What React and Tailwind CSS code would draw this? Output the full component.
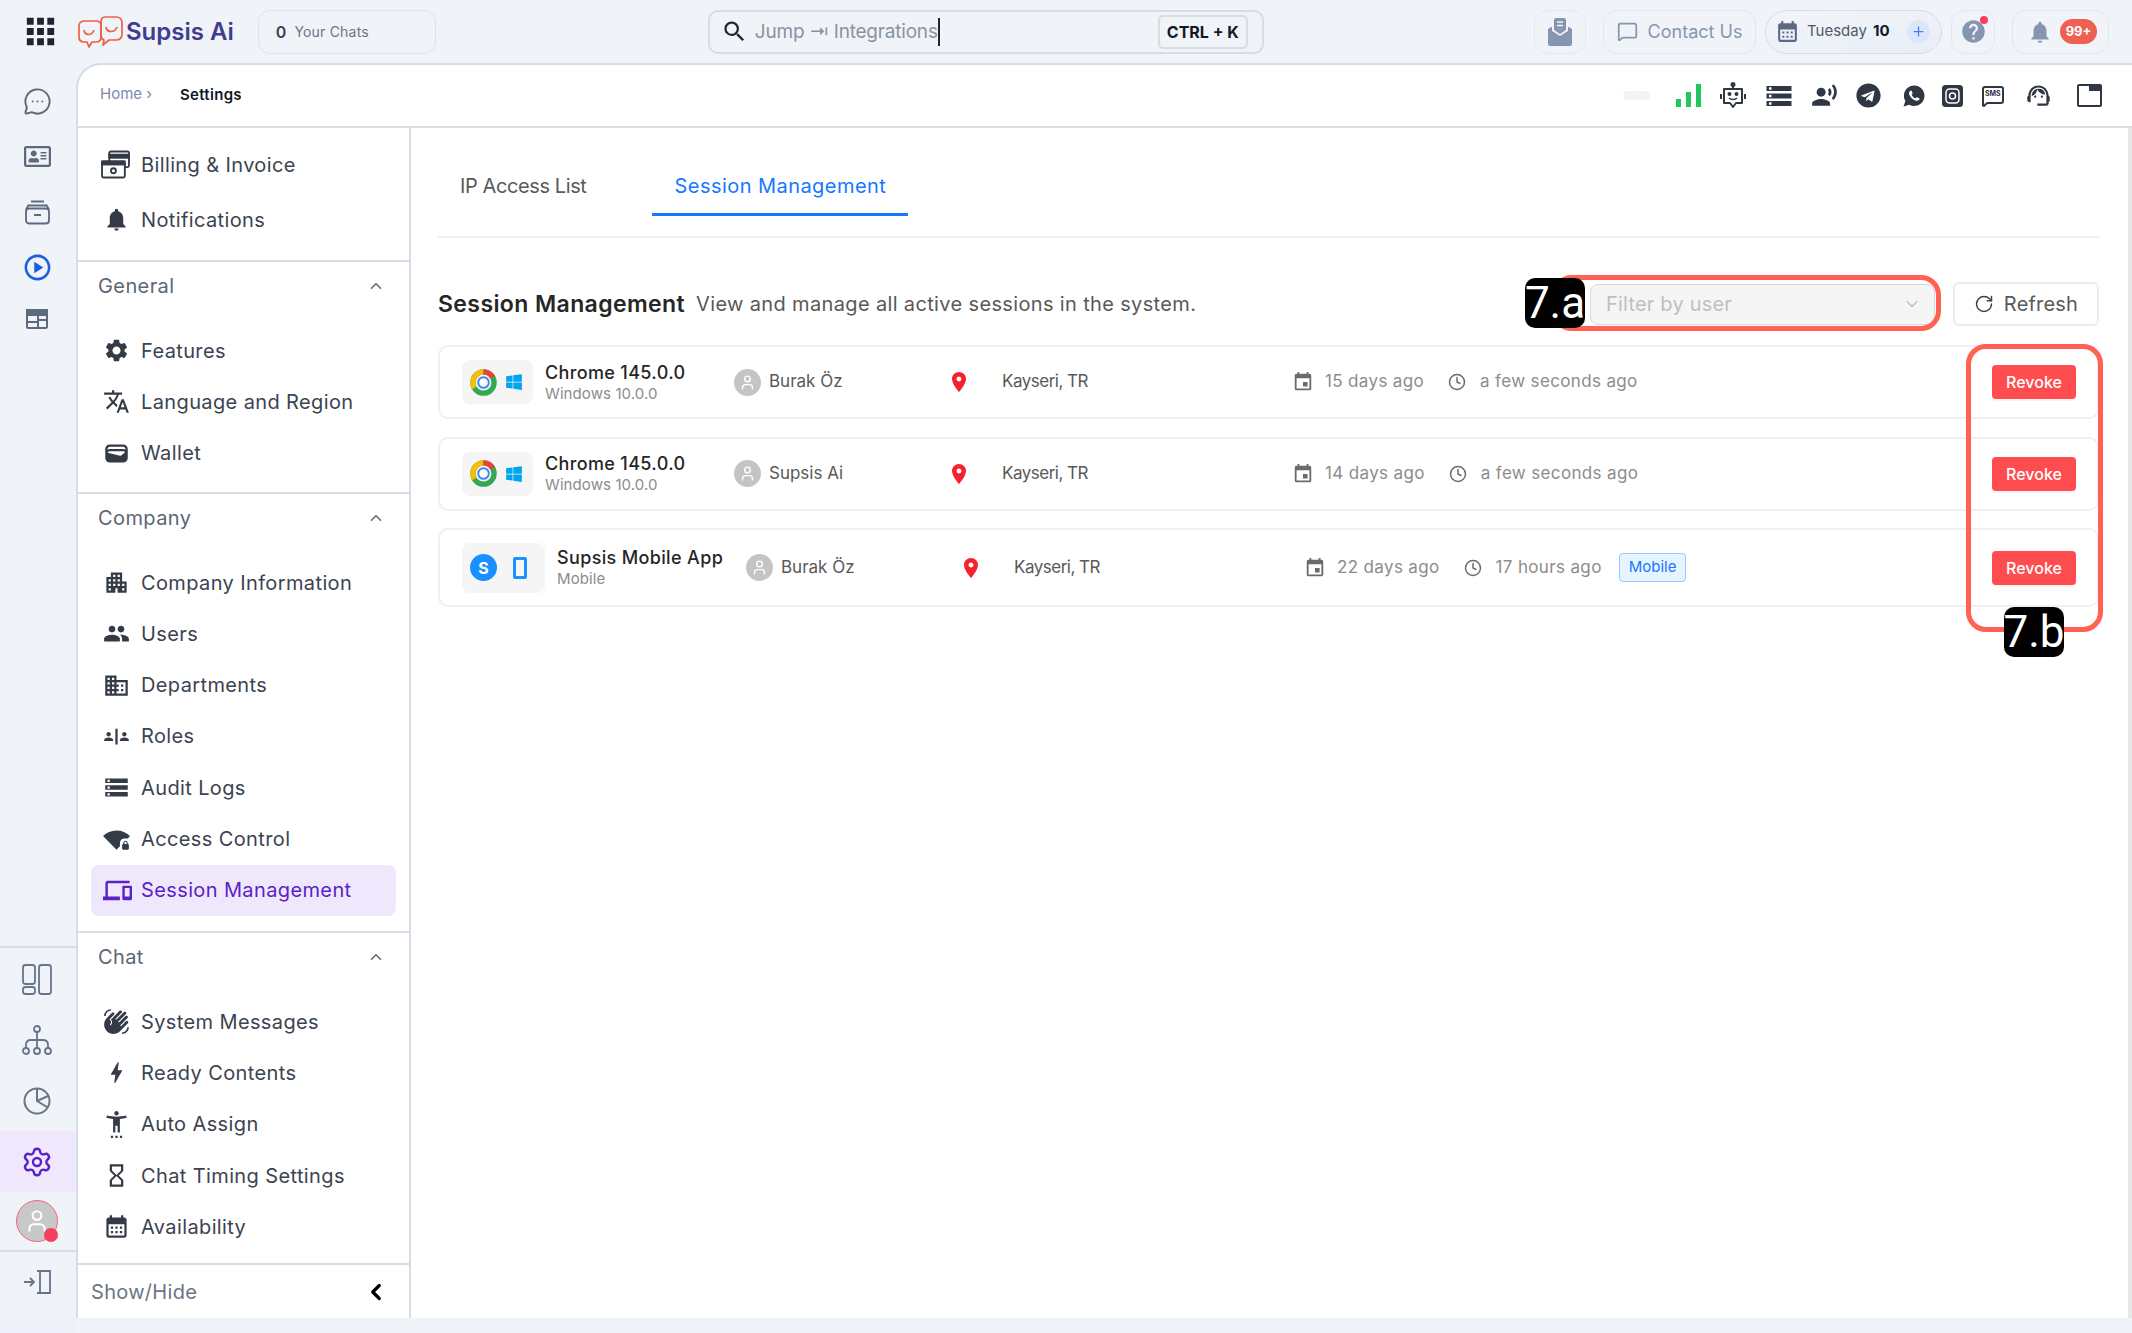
import React from "react";
import { MdApps, MdNotifications, MdSettings, MdTranslate, MdWallet, MdApartment, MdPeople, MdDomain, MdSafetyDivider, MdStorage, MdSignalWifi4BarLock, MdOutlineDevices, MdWavingHand, MdBolt, MdSettingsAccessibility, MdHourglassEmpty, MdCalendarMonth, MdLocationOn, MdEvent, MdSearch, MdRecordVoiceOver, MdOutlineSupportAgent, MdOutlinePlayCircle, MdHelp } from "react-icons/md";
import { FaTelegram, FaWindows, FaRegAddressCard } from "react-icons/fa";
import { IoLogoWhatsapp } from "react-icons/io";
import { MessageCircleMore, ChevronUp, ChevronDown, ChevronLeft, RotateCw, Clock, MessageSquare, Plus, Settings, User } from "lucide-react";

const FONT = "font-['Inter','Liberation_Sans',sans-serif]";

function Logo() {
  return (
    <svg width="45" height="32" viewBox="0 0 45 32" fill="none" stroke="#ee5f45" strokeWidth="1.7" strokeLinejoin="round">
      <path d="M7 5h11c3 0 5 2 5 5v11c0 3-2 5-5 5h-4l-3 5-2-5H6c-3 0-5-2-5-5V10c0-3 2-5 6-5z" />
      <path d="M27 1h11c4 0 6 2 6 6v11c0 4-2 6-6 6h-7l-6 5 1-5c-2-1-3-2-3-4V7c0-4 1-6 4-6z" />
      <path d="M6 14c1 6 8 6 10 0M28 11c1 6 9 6 11 0" />
    </svg>
  );
}

function MailIcon() {
  return (
    <svg width="24" height="28" viewBox="0 0 24 28" fill="#8796b0">
      <path d="M6 2a2 2 0 0 1 2-2h8a2 2 0 0 1 2 2v10l-6 4-6-4z" />
      <path d="M9 4h6M9 7.5h6" stroke="#f0f4f8" strokeWidth="1.6" />
      <path d="M0 11l4-2.5V13l8 5 8-5V8.5l4 2.5v15a2 2 0 0 1-2 2H2a2 2 0 0 1-2-2z" />
    </svg>
  );
}

function BillingIcon() {
  return (
    <svg width="29" height="29" viewBox="0 0 28 28" fill="none" stroke="#343a46" strokeWidth="1.8">
      <rect x="8" y="1.5" width="19" height="15" rx="1.5" />
      <rect x="8" y="4.5" width="19" height="3" fill="#343a46" />
      <rect x="1" y="11" width="22" height="15.5" rx="1.5" fill="#fff" />
      <rect x="1" y="11" width="22" height="3" fill="#343a46" />
      <circle cx="12" cy="20" r="2.4" />
    </svg>
  );
}

function ChromeIcon() {
  return (
    <svg width="27" height="27" viewBox="0 0 28 28" fill="none">
      <circle cx="14" cy="14" r="11" stroke="#34a853" strokeWidth="5.5" />
      <path d="M4.5 19.5A11 11 0 0 1 14 3" stroke="#fbbc05" strokeWidth="5.5" />
      <path d="M14 3a11 11 0 0 1 9.5 5.5" stroke="#ea4335" strokeWidth="5.5" />
      <circle cx="14" cy="14" r="5.5" fill="#fff" stroke="#4285f4" strokeWidth="2" />
    </svg>
  );
}

function RailInbox() {
  return (
    <svg width="27" height="27" viewBox="0 0 27 27" fill="none" stroke="#5d6a7d" strokeWidth="1.8" strokeLinejoin="round">
      <path d="M5 6.5h17M7 2.5h13" />
      <rect x="2" y="9.5" width="23" height="15" rx="3" />
      <path d="M2 10.5l3-5M25 10.5l-3-5M10 16h7" />
    </svg>
  );
}

function RailPanel() {
  return (
    <svg width="24" height="24" viewBox="0 0 24 24" fill="none" stroke="#5d6a7d" strokeWidth="2">
      <rect x="2" y="3" width="20" height="18" rx="1.5" />
      <rect x="2" y="3" width="20" height="5" fill="#5d6a7d" />
      <path d="M13 8v13M2 15h11M13 13h9" />
    </svg>
  );
}

function RailBoard() {
  return (
    <svg width="32" height="32" viewBox="0 0 32 32" fill="none" stroke="#67748a" strokeWidth="1.8">
      <rect x="2" y="2" width="12" height="19" rx="2.5" />
      <rect x="2" y="24" width="12" height="7" rx="2.5" />
      <rect x="18" y="2" width="12" height="29" rx="2.5" />
    </svg>
  );
}

function RailTree() {
  return (
    <svg width="32" height="32" viewBox="0 0 32 32" fill="none" stroke="#67748a" strokeWidth="1.8">
      <circle cx="16" cy="5" r="3" />
      <circle cx="5" cy="27" r="3" />
      <circle cx="16" cy="27" r="3" />
      <circle cx="27" cy="27" r="3" />
      <path d="M16 8v16M5 24v-3c0-3 2-5 5-5h12c3 0 5 2 5 5v3" />
    </svg>
  );
}

function RailPie() {
  return (
    <svg width="30" height="30" viewBox="0 0 30 30" fill="none" stroke="#67748a" strokeWidth="2">
      <circle cx="15" cy="15" r="12.5" />
      <path d="M15 3v12l10 6M15 15l11-5" />
    </svg>
  );
}

function RailCollapse() {
  return (
    <svg width="30" height="26" viewBox="0 0 30 26" fill="none" stroke="#67748a" strokeWidth="1.8">
      <path d="M2 13h10M8 9l4 4-4 4" />
      <path d="M15 2h3v22h-3M18 2h10v22H18" />
    </svg>
  );
}

function RobotIcon() {
  return (
    <svg width="26" height="28" viewBox="0 0 26 28" fill="none" stroke="#2f3644" strokeWidth="2" strokeLinejoin="round">
      <circle cx="13" cy="2.5" r="1.5" fill="#2f3644" />
      <path d="M13 4v3" />
      <path d="M4 7h18v14h-6l-3 4-3-4H4z" />
      <path d="M1 12v5M25 12v5" />
      <path d="M9 16c2 2 6 2 8 0" strokeWidth="1.6" />
      <circle cx="9.5" cy="12" r="1" fill="#2f3644" />
      <circle cx="16.5" cy="12" r="1" fill="#2f3644" />
    </svg>
  );
}

function InstagramIcon() {
  return (
    <svg width="21" height="24" viewBox="0 0 21 24">
      <rect x="0" y="1" width="21" height="22" rx="3.5" fill="#2f3644" />
      <rect x="4" y="5" width="13" height="14" rx="3.5" fill="none" stroke="#fff" strokeWidth="1.5" />
      <circle cx="10.5" cy="12" r="3" fill="none" stroke="#fff" strokeWidth="1.5" />
    </svg>
  );
}

function WindowIcon() {
  return (
    <svg width="25" height="23" viewBox="0 0 25 23" fill="none">
      <rect x="1" y="1" width="23" height="21" rx="1" stroke="#2f3644" strokeWidth="2" />
      <rect x="12" y="1" width="12" height="6" fill="#2f3644" />
    </svg>
  );
}

function SignalIcon() {
  return (
    <svg width="25" height="23" viewBox="0 0 25 23" fill="#22c55e">
      <rect x="0" y="15" width="5" height="8" />
      <rect x="10" y="8" width="5" height="15" />
      <rect x="20" y="0" width="5" height="23" />
    </svg>
  );
}

function SideItem({ icon, label, active }) {
  return (
    <div className={`mx-[13px] flex h-[51.3px] items-center rounded-[8px] px-[12px] ${active ? "bg-[#efe8fd] text-[#5b21c8]" : "text-[#3c4350]"}`}>
      <span className="flex w-[38px] shrink-0 items-center">{icon}</span>
      <span className="text-[20px] leading-none tracking-[0.38px]">{label}</span>
    </div>
  );
}

function SideSection({ title, items, pb }) {
  return (
    <div className={`border-b-2 border-[#d5dde6] ${pb}`}>
      <div className="flex h-[48px] items-center justify-between pl-[20px] pr-[24px] text-[#5c6675]">
        <span className="text-[20px] tracking-[0.4px]">{title}</span>
        <ChevronUp size={18} />
      </div>
      <div className="pt-[15px]">
        {items.map((it) => (
          <SideItem key={it.label} {...it} />
        ))}
      </div>
    </div>
  );
}

const ic = "text-[#343a46] text-[27px]";

function SessionRow({ mobile, title, sub, user, loc, created, seen, h }) {
  return (
    <div className={`flex items-center rounded-[10px] border-2 border-[#f0f0f0] pl-[22px] pr-[21px] ${h}`}>
      <div className={`flex items-center rounded-[8px] bg-[#f5f5f5] pl-[8px] ${mobile ? "h-[50px] w-[83px] gap-[16px]" : "h-[44px] w-[71px] gap-[8px]"}`}>
        {mobile ? (
          <>
            <span className="flex h-[27px] w-[27px] items-center justify-center rounded-full bg-[#1a8fff] text-[16px] font-bold text-white">S</span>
            <span className="h-[22px] w-[14px] rounded-[2px] border-[3px] border-[#1a8fff]" />
          </>
        ) : (
          <>
            <ChromeIcon />
            <FaWindows className="text-[18px] text-[#00a4ef]" />
          </>
        )}
      </div>
      <div className="ml-[12px] w-[189px]">
        <div className="text-[18px] font-medium leading-[22px] tracking-[0.35px] text-[#262626]">{title}</div>
        <div className="text-[15px] leading-[19px] tracking-[0.1px] text-[#8c8c8c]">{sub}</div>
      </div>
      <div className="flex w-[213px] items-center gap-[8px]">
        <span className="flex h-[27px] w-[27px] items-center justify-center rounded-full bg-[#c4c4c4]">
          <User size={17} className="text-white" />
        </span>
        <span className="text-[17px] text-[#595959]">{user}</span>
      </div>
      <MdLocationOn className="text-[24px] text-[#f5222d]" />
      <span className="ml-[31px] w-[290px] text-[17px] tracking-[-0.5px] text-[#595959]">{loc}</span>
      <div className="flex items-center gap-[11px] text-[17px] tracking-[0.35px] text-[#8c8c8c]">
        <MdEvent className="text-[22px] text-[#6b6b6b]" />
        <span>{created}</span>
        <Clock size={18} className="ml-[13px] text-[#6b6b6b]" />
        <span className="ml-[3px]">{seen}</span>
        {mobile && <span className="ml-[6px] rounded-[4px] border border-[#91caff] bg-[#e6f4ff] px-[9px] py-[2px] text-[15px] tracking-normal text-[#1677ff]">Mobile</span>}
      </div>
      <button className="ml-auto h-[34px] w-[84px] rounded-[4px] bg-[#ff4d4f] text-[16px] font-medium text-white shadow-[0_2px_0_rgba(255,38,5,0.06)]">Revoke</button>
    </div>
  );
}

const general = [
  { label: "Features", icon: <MdSettings className={ic} /> },
  { label: "Language and Region", icon: <MdTranslate className={ic} /> },
  { label: "Wallet", icon: <MdWallet className={ic} /> },
];
const company = [
  { label: "Company Information", icon: <MdApartment className={ic} /> },
  { label: "Users", icon: <MdPeople className={ic} /> },
  { label: "Departments", icon: <MdDomain className={ic} /> },
  { label: "Roles", icon: <MdSafetyDivider className={ic} /> },
  { label: "Audit Logs", icon: <MdStorage className={ic} /> },
  { label: "Access Control", icon: <MdSignalWifi4BarLock className={ic} /> },
  { label: "Session Management", active: true, icon: <MdOutlineDevices className="text-[29px] text-[#5b21c8]" /> },
];
const chat = [
  { label: "System Messages", icon: <MdWavingHand className={ic} /> },
  { label: "Ready Contents", icon: <MdBolt className={ic} /> },
  { label: "Auto Assign", icon: <MdSettingsAccessibility className={ic} /> },
  { label: "Chat Timing Settings", icon: <MdHourglassEmpty className={ic} /> },
  { label: "Availability", icon: <MdCalendarMonth className={ic} /> },
];

const topBtn = "flex h-[44px] items-center rounded-[14px] border border-[#e3e8ee]";

export default function App() {
  return (
    <div className={`${FONT} relative flex h-[1333px] flex-col overflow-hidden bg-[#f0f4f8]`}>
      {/* Top bar */}
      <header className="flex h-[63px] shrink-0 items-center">
        <MdApps className="ml-[20px] text-[41px] text-[#1f2430]" />
        <div className="ml-[17px]"><Logo /></div>
        <span className="ml-[3px] text-[24px] font-semibold leading-none text-[#3f3d8f]">Supsis Ai</span>
        <div className="ml-[24px] flex h-[44px] w-[178px] items-center rounded-[12px] border border-[#dde3ea] pl-[17px]">
          <span className="text-[16px] font-semibold text-[#3c4350]">0</span>
          <span className="ml-[8px] text-[14px] tracking-[0.2px] text-[#6b7583]">Your Chats</span>
        </div>
        <div className="ml-[272px] flex h-[44px] w-[556px] items-center rounded-[10px] border-2 border-[#d5dde6] pl-[11px] pr-[14px]">
          <MdSearch className="text-[27px] text-[#1f2430]" />
          <span className="ml-[7px] border-r-2 border-[#1f2430] py-[3px] text-[19px] leading-[22px] tracking-[-0.2px] text-[#8a93a0]">Jump ⇥ Integrations</span>
          <span className="ml-auto flex h-[34px] w-[90px] items-center justify-center rounded-[5px] border-2 border-[#d5dde6] text-[16px] font-bold text-[#14181f]">CTRL + K</span>
        </div>
        <div className="ml-auto mr-[23px] flex items-center">
          <div className={`${topBtn} w-[52px] justify-center`}><MailIcon /></div>
          <div className={`${topBtn} ml-[17px] w-[153px] justify-center gap-[10px] text-[#8796b0]`}>
            <MessageSquare size={21} />
            <span className="text-[18px]">Contact Us</span>
          </div>
          <div className="ml-[9px] flex h-[44px] w-[177px] items-center rounded-full border border-[#d5dde6] bg-gradient-to-br from-[#f2f5f9] to-[#e8eef7] pl-[9px]">
            <MdCalendarMonth className="text-[25px] text-[#5d6a85]" />
            <span className="ml-[7px] text-[15px] text-[#4f5a6b]">Tuesday</span>
            <span className="ml-[6px] text-[15px] font-bold text-[#101828]">10</span>
            <span className="ml-auto mr-[11px] flex h-[23px] w-[23px] items-center justify-center rounded-full bg-[#dbe7f8]">
              <Plus size={15} className="text-[#3b82f6]" />
            </span>
          </div>
          <div className={`${topBtn} relative ml-[9px] w-[44px] justify-center`}>
            <MdHelp className="text-[27px] text-[#8796b0]" />
            <span className="absolute right-[6px] top-[5px] h-[8px] w-[8px] rounded-full bg-[#f43f5e]" />
          </div>
          <div className={`${topBtn} ml-[17px] w-[97px] gap-[7px] pl-[14px]`}>
            <MdNotifications className="text-[26px] text-[#8796b0]" />
            <span className="flex h-[25px] w-[37px] items-center justify-center rounded-full bg-[#ef5f52] text-[13px] font-bold text-white">99+</span>
          </div>
        </div>
      </header>

      <div className="flex min-h-0 flex-1">
        {/* Rail */}
        <nav className="flex w-[76px] shrink-0 flex-col text-[#5d6a7d]">
          <div className="flex flex-col items-center pt-[11px] pr-[2px]">
            <div className="flex h-[54px] items-center"><MessageCircleMore size={29} strokeWidth={1.6} /></div>
            <div className="flex h-[56px] items-center"><FaRegAddressCard className="text-[27px]" /></div>
            <div className="flex h-[56px] items-center"><RailInbox /></div>
            <div className="flex h-[54px] items-center"><MdOutlinePlayCircle className="text-[31px] text-[#1d5fe0]" /></div>
            <div className="flex h-[50px] items-center"><RailPanel /></div>
          </div>
          <div className="mt-auto border-t-2 border-[#d5dde6]">
            <div className="flex h-[61px] items-center justify-center pr-[2px]"><RailBoard /></div>
            <div className="flex h-[61px] items-center justify-center pr-[2px]"><RailTree /></div>
            <div className="flex h-[61px] items-center justify-center pr-[2px]"><RailPie /></div>
            <div className="flex h-[61px] items-center justify-center bg-[#f0e8fd] pr-[2px]"><Settings size={32} strokeWidth={1.8} className="text-[#5b21c8]" /></div>
            <div className="flex h-[60px] items-center justify-center border-b-2 border-[#d5dde6] pr-[2px]">
              <span className="relative flex h-[42px] w-[42px] items-center justify-center rounded-full border border-[#f2687c] bg-[#c8c8c8]">
                <User size={26} className="text-white" />
                <span className="absolute bottom-[-1px] right-[-1px] h-[14px] w-[14px] rounded-full bg-[#f43f5e]" />
              </span>
            </div>
            <div className="flex h-[66px] items-start justify-center pr-[2px] pt-[17px]"><RailCollapse /></div>
            <div className="h-[15px] bg-[#eef1f9]" />
          </div>
        </nav>

        {/* Main */}
        <div className="mb-[15px] flex min-w-0 flex-1 flex-col overflow-hidden rounded-tl-[25px] border-l-2 border-t-2 border-[#d5dde6] bg-white">
          <div className="flex h-[63px] shrink-0 items-center border-b-2 border-[#d5dde6] pl-[22px] pr-[30px]">
            <span className="-mt-[2px] text-[15px] text-[#7a88b0]">Home ›</span>
            <span className="ml-[28px] text-[15px] font-semibold tracking-[0.3px] text-[#111827]">Settings</span>
            <div className="ml-auto flex items-center">
              <span className="h-[9px] w-[27px] rounded-full bg-[#f1f4f7]" />
              <span className="ml-[26px] flex"><SignalIcon /></span>
              <span className="ml-[19px] flex"><RobotIcon /></span>
              <MdStorage className="ml-[18px] text-[30px] text-[#2f3644]" />
              <MdRecordVoiceOver className="ml-[17px] text-[27px] text-[#2f3644]" />
              <FaTelegram className="ml-[18px] text-[25px] text-[#2f3644]" />
              <IoLogoWhatsapp className="ml-[21px] text-[24px] text-[#2f3644]" />
              <span className="ml-[16px] flex"><InstagramIcon /></span>
              <span className="relative ml-[18px] flex">
                <MessageSquare size={24} className="text-[#2f3644]" />
                <span className="absolute left-[4px] top-[6px] text-[7px] font-bold leading-[8px] text-[#2f3644]">SMS</span>
              </span>
              <MdOutlineSupportAgent className="ml-[20px] text-[27px] text-[#2f3644]" />
              <span className="ml-[25px] flex"><WindowIcon /></span>
            </div>
          </div>

          <div className="flex min-h-0 flex-1">
            {/* Settings sidebar */}
            <aside className="flex w-[333px] shrink-0 flex-col overflow-hidden border-r-2 border-[#d5dde6]">
              <div className="h-[134px] shrink-0 border-b-2 border-[#d5dde6] pt-[9px]">
                <div className="mx-[13px] flex h-[55px] items-center px-[10px] text-[#3c4350]">
                  <span className="flex w-[40px] shrink-0"><BillingIcon /></span>
                  <span className="text-[20px] tracking-[0.38px]">Billing &amp; Invoice</span>
                </div>
                <div className="mx-[13px] flex h-[55px] items-center px-[12px] text-[#3c4350]">
                  <span className="flex w-[38px] shrink-0"><MdNotifications className={ic} /></span>
                  <span className="text-[20px] tracking-[0.38px]">Notifications</span>
                </div>
              </div>
              <SideSection title="General" items={general} pb="pb-[13px]" />
              <SideSection title="Company" items={company} pb="pb-[15px]" />
              <SideSection title="Chat" items={chat} pb="pb-[11px]" />
              <div className="flex flex-1 items-center justify-between pl-[13px] pr-[20px] text-[#6b7583]">
                <span className="text-[20px] tracking-[0.3px]">Show/Hide</span>
                <ChevronLeft size={26} strokeWidth={3} className="text-black" />
              </div>
            </aside>

            {/* Content */}
            <main className="min-w-0 flex-1 pl-[27px] pr-[29px]">
              <div className="flex h-[88px] items-end gap-[44px]">
                <div className="flex h-[67px] items-start px-[22px] pt-[25px] text-[20px] leading-[24px] tracking-[-0.4px] text-[#595959]">IP Access List</div>
                <div className="flex h-[67px] items-start border-b-[3px] border-[#1677ff] px-[22px] pt-[25px] text-[20px] leading-[24px] tracking-[0.45px] text-[#1677ff]">Session Management</div>
              </div>
              <div className="mt-[20px] h-[2px] bg-[#f0f0f0]" />
              <div className="mt-[44px] flex h-[44px] items-center">
                <h1 className="text-[23px] font-semibold tracking-[0.4px] text-[#262626]">Session Management</h1>
                <span className="ml-[11px] text-[20px] tracking-[0.35px] text-[#595959]">View and manage all active sessions in the system.</span>
                <div className="ml-auto flex h-[41px] w-[345px] items-center justify-between rounded-[8px] border border-[#d9d9d9] bg-[#f5f5f5] pl-[15px] pr-[12px]">
                  <span className="text-[20px] tracking-[0.2px] text-[#bfbfbf]">Filter by user</span>
                  <ChevronDown size={20} strokeWidth={1.5} className="text-[#bfbfbf]" />
                </div>
                <button className="ml-[18px] flex h-[44px] w-[146px] items-center justify-center gap-[10px] rounded-[6px] border-2 border-[#ededed] text-[20px] tracking-[0.2px] text-[#595959]">
                  <RotateCw size={20} strokeWidth={1.8} className="text-[#434343]" />
                  Refresh
                </button>
              </div>
              <div className="mt-[19px] flex flex-col gap-[17.5px]">
                <SessionRow h="h-[74px]" title="Chrome 145.0.0" sub="Windows 10.0.0" user="Burak Öz" loc="Kayseri, TR" created="15 days ago" seen="a few seconds ago" />
                <SessionRow h="h-[74px]" title="Chrome 145.0.0" sub="Windows 10.0.0" user="Supsis Ai" loc="Kayseri, TR" created="14 days ago" seen="a few seconds ago" />
                <SessionRow h="h-[79px]" mobile title="Supsis Mobile App" sub="Mobile" user="Burak Öz" loc="Kayseri, TR" created="22 days ago" seen="17 hours ago" />
              </div>
            </main>
            <div className="w-[4px] shrink-0 bg-[#e8e8e8]" />
          </div>
        </div>
      </div>

      {/* Annotation overlays */}
      <div className="absolute left-[1552px] top-[275px] h-[56px] w-[389px] rounded-[20px] border-[5px] border-[#ff6152]" />
      <div className="absolute left-[1525px] top-[278px] flex h-[50px] w-[60px] items-center justify-center rounded-[10px] bg-black font-['Roboto',sans-serif] text-[44px] leading-none text-white">7.a</div>
      <div className="absolute left-[1966px] top-[344px] h-[288px] w-[137px] rounded-[20px] border-[5px] border-[#ff6152]" />
      <div className="absolute left-[2004px] top-[607px] flex h-[50px] w-[60px] items-center justify-center rounded-[10px] bg-black font-['Roboto',sans-serif] text-[44px] leading-none text-white">7.b</div>
    </div>
  );
}
